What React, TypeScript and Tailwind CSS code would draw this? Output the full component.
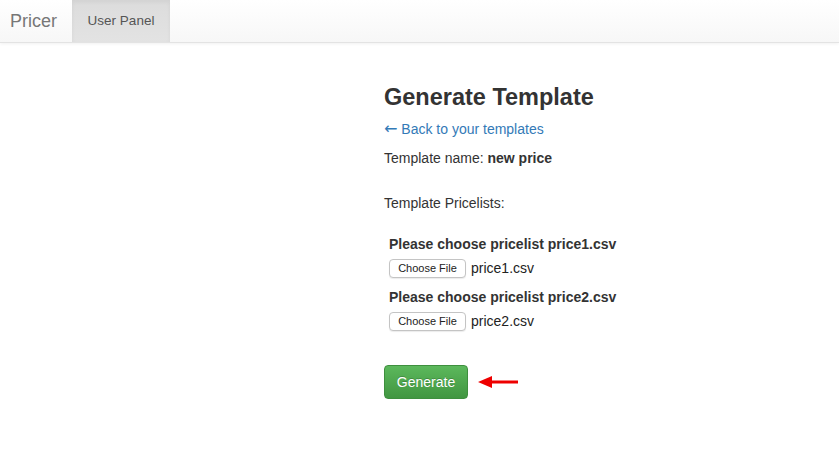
export default function App() {
  const pricelists = ["price1.csv", "price2.csv"];

  return (
    <div className="min-h-[458px] bg-white text-[14px] text-[#333] [font-family:'Liberation_Sans',Arial,sans-serif]">
      <nav className="flex h-[43px] items-stretch border-b border-[#e3e3e3] bg-gradient-to-b from-white to-[#f7f7f7] shadow-[0_1px_3px_rgba(0,0,0,0.06)]">
        <div className="flex items-center pl-[10px] pr-[15px] text-[18px] text-[#777]">Pricer</div>
        <div className="flex w-[98px] items-center justify-center bg-gradient-to-b from-[#dcdcdc] to-[#e3e3e3] text-[13.5px] text-[#555] shadow-[inset_0_2px_4px_rgba(0,0,0,0.05)]">
          User Panel
        </div>
      </nav>

      <div className="ml-[384px] pt-[41px]">
        <h2 className="text-[23.5px] font-bold leading-[26px] text-[#333]">Generate Template</h2>
        <a href="#" className="mt-[9px] block leading-[20px] text-[#337ab7]">
          <span className="[font-family:'DejaVu_Sans',sans-serif] text-[16px] leading-[16px]">←</span> Back to your templates
        </a>
        <p className="mt-[9px] leading-[20px]">
          Template name: <b>new price</b>
        </p>
        <p className="mt-[25px] leading-[20px]">Template Pricelists:</p>

        <div className="ml-[5px] mt-[21px] flex flex-col">
          {pricelists.map((name, i) => (
            <div key={name} className={i > 0 ? "mt-[8px]" : ""}>
              <label className="block font-bold leading-[20px]">Please choose pricelist {name}</label>
              <div className="mt-[4px] flex items-center">
                <span className="flex h-[19px] w-[77px] items-center justify-center rounded-[4px] border border-[#c4c4c4] bg-white text-[11px] text-[#222] shadow-[0_1px_1px_rgba(0,0,0,0.08)]">
                  Choose File
                </span>
                <span className="ml-[5px] text-[14px] text-[#222]">{name}</span>
              </div>
            </div>
          ))}
        </div>

        <div className="mt-[33px] flex items-center">
          <button className="h-[34px] w-[84px] rounded-[4px] border border-[#3e8f3e] bg-gradient-to-b from-[#5cb85c] to-[#419641] text-[14px] text-white [text-shadow:0_-1px_0_rgba(0,0,0,0.2)]">
            Generate
          </button>
          <svg width="42" height="14" viewBox="0 0 42 14" className="ml-[10px]">
            <line x1="10" y1="7" x2="40" y2="7" stroke="#ee0000" strokeWidth="3" />
            <polygon points="0,7 14,1 14,13" fill="#ee0000" />
          </svg>
        </div>
      </div>
    </div>
  );
}
